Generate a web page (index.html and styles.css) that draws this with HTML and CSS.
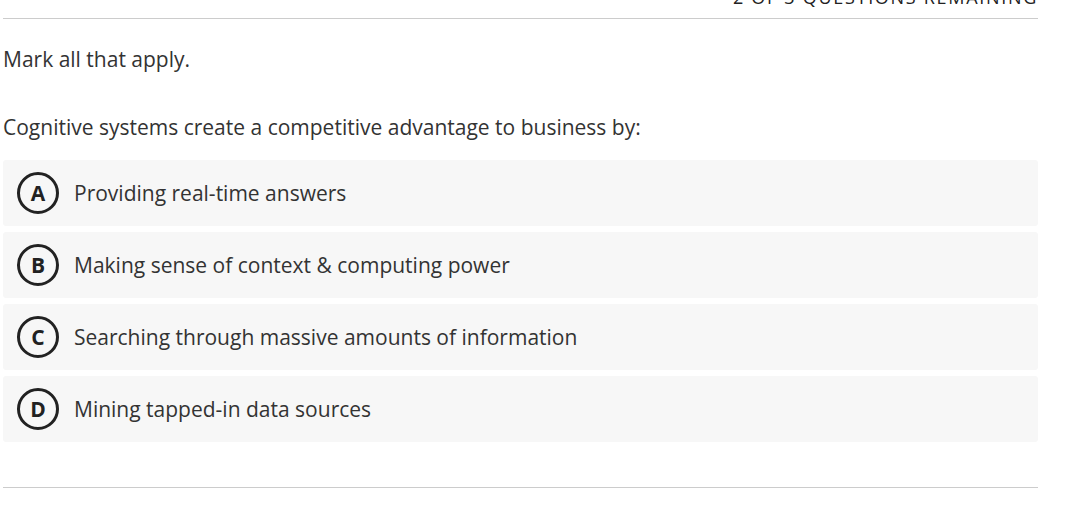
FILE: index.html
```html
<!DOCTYPE html>
<html lang="en">
<head>
<meta charset="utf-8">
<title>Question</title>
<link rel="stylesheet" href="styles.css">
</head>
<body>
<div class="page">
  <div class="progress">2 of 3 questions remaining</div>
  <hr class="rule rule-top">
  <p class="instructions">Mark all that apply.</p>
  <p class="question">Cognitive systems create a competitive advantage to business by:</p>
  <ul class="options">
    <li class="option"><span class="letter">A</span><span class="label">Providing real-time answers</span></li>
    <li class="option"><span class="letter">B</span><span class="label">Making sense of context &amp; computing power</span></li>
    <li class="option"><span class="letter">C</span><span class="label">Searching through massive amounts of information</span></li>
    <li class="option"><span class="letter">D</span><span class="label">Mining tapped-in data sources</span></li>
  </ul>
  <hr class="rule rule-bottom">
</div>
</body>
</html>
```
FILE: styles.css
```css
html, body {
  margin: 0;
  padding: 0;
  background: #ffffff;
  overflow: hidden;
}

body {
  font-family: "Open Sans", "Noto Sans", sans-serif;
  color: #333333;
}

.page {
  width: 1035px;
  margin-left: 3px;
}

.progress {
  margin-top: -15px;
  height: 24px;
  font-size: 18px;
  line-height: 24px;
  text-transform: uppercase;
  letter-spacing: 1.7px;
  text-align: right;
  color: #222222;
}

.rule {
  border: 0;
  height: 1px;
  background: #cccccc;
  margin: 0;
}

.rule-top {
  margin-top: 9px;
}

.instructions {
  margin: 26px 0 0;
  font-size: 21px;
  line-height: 28px;
}

.question {
  margin: 40px 0 0;
  font-size: 21px;
  line-height: 28px;
}

.options {
  list-style: none;
  margin: 19px 0 0;
  padding: 0;
  display: flex;
  flex-direction: column;
  gap: 6px;
}

.option {
  height: 66px;
  display: flex;
  align-items: center;
  gap: 15px;
  padding-left: 14px;
  background: #f7f7f7;
  border-radius: 3px;
  font-size: 21px;
  line-height: 28px;
}

.letter {
  box-sizing: border-box;
  flex: none;
  width: 42px;
  height: 42px;
  border: 3px solid #222222;
  border-radius: 50%;
  display: flex;
  align-items: center;
  justify-content: center;
  font-weight: 700;
  font-size: 21px;
  color: #222222;
}

.label {
  color: #333333;
}

.rule-bottom {
  margin-top: 45px;
}
```
